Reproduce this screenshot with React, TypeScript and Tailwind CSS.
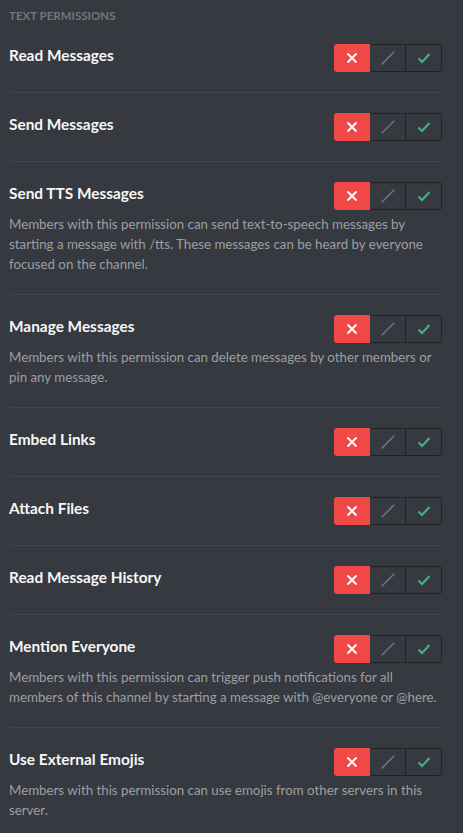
import React from "react"

type Perm = { name: string; desc?: string }

const perms: Perm[] = [
  { name: "Read Messages" },
  { name: "Send Messages" },
  {
    name: "Send TTS Messages",
    desc: "Members with this permission can send text-to-speech messages by starting a message with /tts. These messages can be heard by everyone focused on the channel.",
  },
  {
    name: "Manage Messages",
    desc: "Members with this permission can delete messages by other members or pin any message.",
  },
  { name: "Embed Links" },
  { name: "Attach Files" },
  { name: "Read Message History" },
  {
    name: "Mention Everyone",
    desc: "Members with this permission can trigger push notifications for all members of this channel by starting a message with @everyone or @here.",
  },
  {
    name: "Use External Emojis",
    desc: "Members with this permission can use emojis from other servers in this server.",
  },
]

function Toggle() {
  return (
    <div className="flex h-[28px] w-[108px] shrink-0 rounded-[3px] border border-[#202225]">
      <div className="flex w-[36px] -my-px -ml-px items-center justify-center rounded-l-[3px] bg-[#f04747]">
        <svg width="12" height="12" viewBox="0 0 12 12">
          <path d="M1.5 1.5 L10.5 10.5 M10.5 1.5 L1.5 10.5" stroke="#fff" strokeWidth="2" />
        </svg>
      </div>
      <div className="flex w-[36px] items-center justify-center border-r border-[#202225]">
        <svg width="16" height="16" viewBox="0 0 16 16">
          <path d="M14 2 L2 14" stroke="#72767d" strokeWidth="1.5" strokeLinecap="round" />
        </svg>
      </div>
      <div className="flex flex-1 items-center justify-center">
        <svg width="14" height="12" viewBox="0 0 14 12">
          <path d="M1.5 6.5 L5 10 L12.5 2" stroke="#43b581" strokeWidth="2" fill="none" />
        </svg>
      </div>
    </div>
  )
}

export default function App() {
  return (
    <div className="min-h-screen bg-[#36393f] pl-[9px] pr-[21px] pt-[8px] font-['Lato',sans-serif]">
      <div className="text-[11.5px] font-bold uppercase leading-[16px] text-[#72767d]">
        Text Permissions
      </div>
      <div className="mt-[20px]">
        {perms.map((p, i) => (
          <div key={p.name}>
            {i > 0 && <div className="h-px bg-[#42454b]" />}
            <div className={i === 0 ? "pb-[20px]" : "py-[20px]"}>
              <div className="flex h-[28px] items-center justify-between">
                <div className="pb-[4px] text-[15.4px] font-bold text-[#f6f6f7]">{p.name}</div>
                <Toggle />
              </div>
              {p.desc && (
                <div className="mt-[4px] text-[13.3px] leading-[20px] text-[#9c9fa4]">{p.desc}</div>
              )}
            </div>
          </div>
        ))}
      </div>
    </div>
  )
}
